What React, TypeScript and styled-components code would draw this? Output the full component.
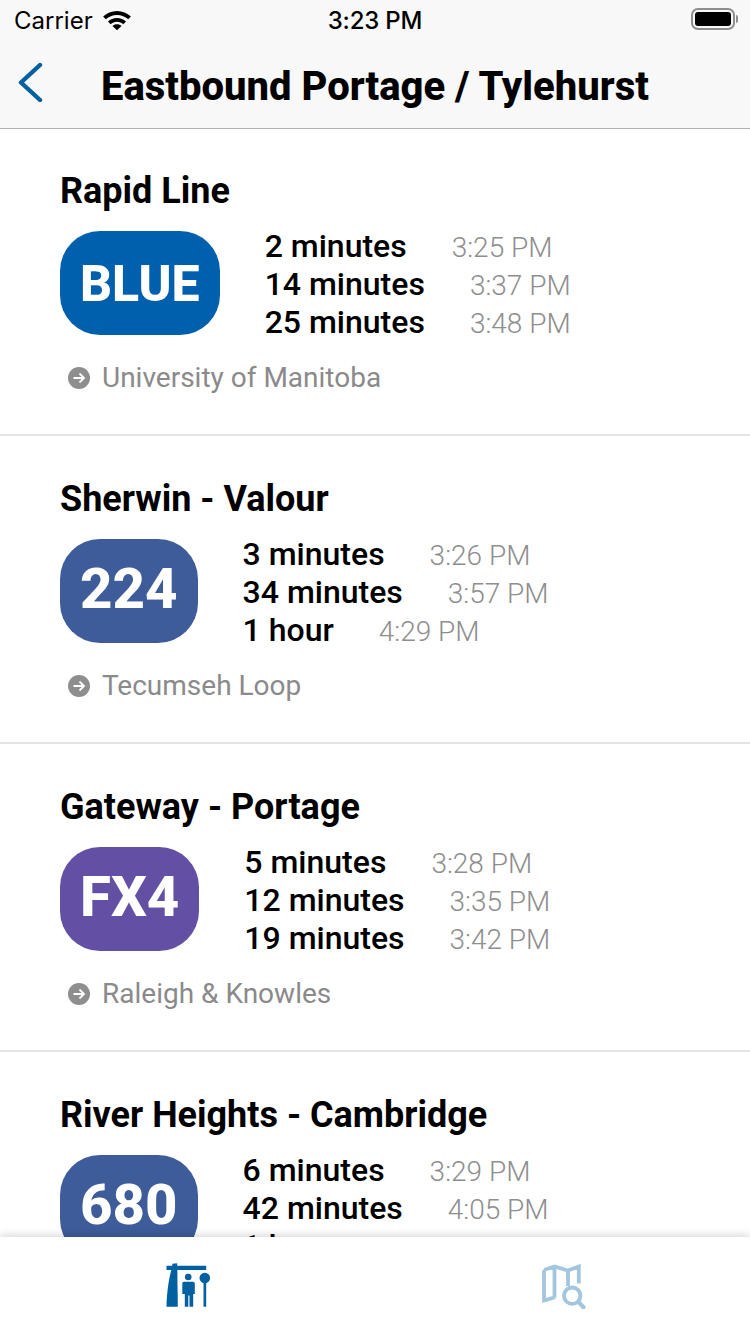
import React, { FC } from 'react'
import styled, { createGlobalStyle } from 'styled-components'

type Arrival = { wait: string; clock: string }
type Route = { name: string; badge: string; color: string; arrivals: Arrival[]; destination: string }

const routes: Route[] = [
  {
    name: 'Rapid Line',
    badge: 'BLUE',
    color: '#0060ae',
    arrivals: [
      { wait: '2 minutes', clock: '3:25 PM' },
      { wait: '14 minutes', clock: '3:37 PM' },
      { wait: '25 minutes', clock: '3:48 PM' },
    ],
    destination: 'University of Manitoba',
  },
  {
    name: 'Sherwin - Valour',
    badge: '224',
    color: '#3d5c99',
    arrivals: [
      { wait: '3 minutes', clock: '3:26 PM' },
      { wait: '34 minutes', clock: '3:57 PM' },
      { wait: '1 hour', clock: '4:29 PM' },
    ],
    destination: 'Tecumseh Loop',
  },
  {
    name: 'Gateway - Portage',
    badge: 'FX4',
    color: '#634fa3',
    arrivals: [
      { wait: '5 minutes', clock: '3:28 PM' },
      { wait: '12 minutes', clock: '3:35 PM' },
      { wait: '19 minutes', clock: '3:42 PM' },
    ],
    destination: 'Raleigh & Knowles',
  },
  {
    name: 'River Heights - Cambridge',
    badge: '680',
    color: '#3d5c99',
    arrivals: [
      { wait: '6 minutes', clock: '3:29 PM' },
      { wait: '42 minutes', clock: '4:05 PM' },
      { wait: '1 hour', clock: '4:35 PM' },
    ],
    destination: 'Downtown',
  },
]

const App: FC = () => {
  return (
    <>
      <GlobalStyle />
      <Screen>
        <TopBar>
          <StatusBar>
            <StatusLeft>
              <span>Carrier</span>
              <svg width="30" height="24" viewBox="0 0 32 24">
                <path d="M16 2.500c-5.700 0-10.900 2.200-14.800 5.800l2.800 3c3.100-2.900 7.300-4.700 12-4.700s8.900 1.800 12 4.700l2.800-3C26.900 4.700 21.700 2.500 16 2.500z" fill="#000" />
                <path d="M16 9.800c-3.700 0-7.100 1.400-9.600 3.800l2.800 2.900c1.800-1.600 4.200-2.600 6.800-2.600s5 1 6.800 2.600l2.800-2.900c-2.500-2.400-5.900-3.800-9.600-3.800z" fill="#000" />
                <path d="M16 16.500c-1.900 0-3.500.7-4.800 1.800L16 23l4.800-4.700c-1.300-1.100-2.900-1.800-4.800-1.800z" fill="#000" />
              </svg>
            </StatusLeft>
            <StatusClock>3:23 PM</StatusClock>
            <Battery>
              <BatteryBody>
                <BatteryFill />
              </BatteryBody>
              <BatteryCap />
            </Battery>
          </StatusBar>
          <NavBar>
            <BackIcon width="26" height="40" viewBox="0 0 26 40">
              <path d="M23 3 L4 20.500 L23 38" fill="none" stroke="#0060a0" strokeWidth="4.400" strokeLinecap="round" strokeLinejoin="round" />
            </BackIcon>
            <NavTitle>Eastbound Portage / Tylehurst</NavTitle>
          </NavBar>
        </TopBar>

        <RouteList>
          {routes.map(route => (
            <RouteRow key={route.badge}>
              <RouteName>{route.name}</RouteName>
              <RouteBody>
                <Badge $color={route.color} $long={route.badge.length > 3}>
                  {route.badge}
                </Badge>
                <Arrivals>
                  {route.arrivals.map(arrival => (
                    <li key={arrival.clock}>
                      <Wait>{arrival.wait}</Wait>
                      <Clock>{arrival.clock}</Clock>
                    </li>
                  ))}
                </Arrivals>
              </RouteBody>
              <Destination>
                <svg width="22" height="22" viewBox="0 0 22 22">
                  <circle cx="11" cy="11" r="11" fill="#8e8e8e" />
                  <path d="M5.500 11h10M11.500 6.500 16 11l-4.500 4.500" fill="none" stroke="#fff" strokeWidth="1.800" />
                </svg>
                <span>{route.destination}</span>
              </Destination>
            </RouteRow>
          ))}
        </RouteList>

        <TabBar>
          <Tab>
            <svg width="48" height="48" viewBox="0 0 48 48">
              <path d="M2.500 4.700H8.300V2.800L13.200 2.300V4.700H42.200V9H13.400C13.300 20 13.800 33 13.800 45.700H2.500C2.800 32 4.600 19 7.300 9H2.500z" fill="#0060a0" />
              <circle cx="24.200" cy="16" r="3.300" fill="#0060a0" />
              <path d="M19.500 20.700h9.500c1 0 1.800.8 1.800 1.800V33h-1.600v12.700h-3.700V34.500h-1.200v11.200h-3.500V33h-2.500V22.500c0-1 .7-1.800 1.700-1.800z" fill="#0060a0" />
              <circle cx="40.800" cy="17" r="5.300" fill="#0060a0" />
              <rect x="39.500" y="20" width="2.700" height="25.700" fill="#0060a0" />
            </svg>
          </Tab>
          <Tab>
            <svg width="48" height="48" viewBox="0 0 48 48">
              <path d="M5 9V39.500L16 36.300M5 9 15.500 5.500 29 9.500 39.800 5.500V22.500M15.500 5.500V36.500M29 9.500V25" fill="none" stroke="#a3c6df" strokeWidth="3.800" />
              <circle cx="33.200" cy="34.700" r="8.200" fill="none" stroke="#a3c6df" strokeWidth="3.800" />
              <path d="M39.500 41 L44.500 46.200" stroke="#a3c6df" strokeWidth="4.200" strokeLinecap="round" />
            </svg>
          </Tab>
        </TabBar>
      </Screen>
    </>
  )
}

export default App

const GlobalStyle = createGlobalStyle`
  html, body {
    margin: 0;
    padding: 0;
    background-color: #fff;
    font-family: Roboto, "Liberation Sans", sans-serif;
  }
  * {
    box-sizing: border-box;
  }
`
const Screen = styled.div`
  display: flex;
  flex-direction: column;
  width: 750px;
  height: 1334px;
  overflow: hidden;
  background-color: #fff;
`
const TopBar = styled.header`
  flex: none;
  height: 129px;
  border-bottom: 1px solid #b2b2b2;
  background-color: #f8f8f8;
`
const StatusBar = styled.div`
  position: relative;
  display: flex;
  justify-content: space-between;
  align-items: center;
  height: 40px;
  padding: 0 12px 0 14px;
  font-family: Inter, Roboto, sans-serif;
  color: #000;
`
const StatusLeft = styled.div`
  display: flex;
  align-items: center;
  gap: 9px;
  font-size: 24px;
`
const StatusClock = styled.div`
  position: absolute;
  left: 0;
  right: 0;
  text-align: center;
  font-size: 24px;
  font-weight: 500;
  letter-spacing: -0.2px;
`
const Battery = styled.div`
  display: flex;
  align-items: center;
  gap: 1px;
  margin-top: -2px;
`
const BatteryBody = styled.div`
  width: 44px;
  height: 22px;
  padding: 2px;
  border: 2px solid #8e8e8e;
  border-radius: 7px;
`
const BatteryFill = styled.div`
  height: 100%;
  border-radius: 3px;
  background-color: #000;
`
const BatteryCap = styled.div`
  width: 2px;
  height: 8px;
  border-radius: 0 2px 2px 0;
  background-color: #8e8e8e;
`
const NavBar = styled.div`
  display: flex;
  align-items: center;
  height: 88px;
  padding: 6px 0 0 17px;
`
const BackIcon = styled.svg`
  flex: none;
  margin-bottom: 10px;
`
const NavTitle = styled.h1`
  margin: 0 0 0 58px;
  font-size: 40px;
  font-weight: 800;
  line-height: 46px;
  color: #000;
  white-space: nowrap;
`
const RouteList = styled.main`
  flex: 1;
  min-height: 0;
  margin-top: -1px;
  overflow: hidden;
`
const RouteRow = styled.section`
  height: 308px;
  padding: 42px 0 0 60px;
  border-bottom: 2px solid #e4e4e4;
`
const RouteName = styled.h2`
  margin: 0;
  font-size: 36px;
  font-weight: 700;
  line-height: 42px;
  color: #000;
`
const RouteBody = styled.div`
  display: flex;
  align-items: flex-start;
  gap: 45px;
  margin-top: 19px;
`
const Badge = styled.div<{ $color: string; $long: boolean }>`
  flex: none;
  padding: 0 20px;
  height: 104px;
  border-radius: 40px;
  background-color: ${p => p.$color};
  font-size: ${p => (p.$long ? 50 : 56.4)}px;
  font-weight: 800;
  line-height: ${p => (p.$long ? 106 : 100)}px;
  color: #fff;
`
const Arrivals = styled.ul`
  margin: -4px 0 0;
  padding: 0;
  list-style: none;

  > li {
    display: flex;
    align-items: baseline;
    gap: 45px;
    height: 38px;
    line-height: 38px;
  }
`
const Wait = styled.span`
  font-size: 32px;
  font-weight: 500;
  color: #000;
`
const Clock = styled.span`
  font-size: 28px;
  font-weight: 300;
  color: #8e8e8e;
`
const Destination = styled.div`
  display: flex;
  align-items: center;
  gap: 12px;
  margin: 20px 0 0 8px;
  font-size: 28px;
  line-height: 34px;
  color: #8a8a8a;
`
const TabBar = styled.nav`
  position: relative;
  flex: none;
  display: flex;
  height: 97px;
  background-color: #fff;
  box-shadow: 0 -2px 8px rgba(0, 0, 0, 0.16);
`
const Tab = styled.div`
  flex: 1;
  display: flex;
  justify-content: center;
  padding-top: 24px;
`
